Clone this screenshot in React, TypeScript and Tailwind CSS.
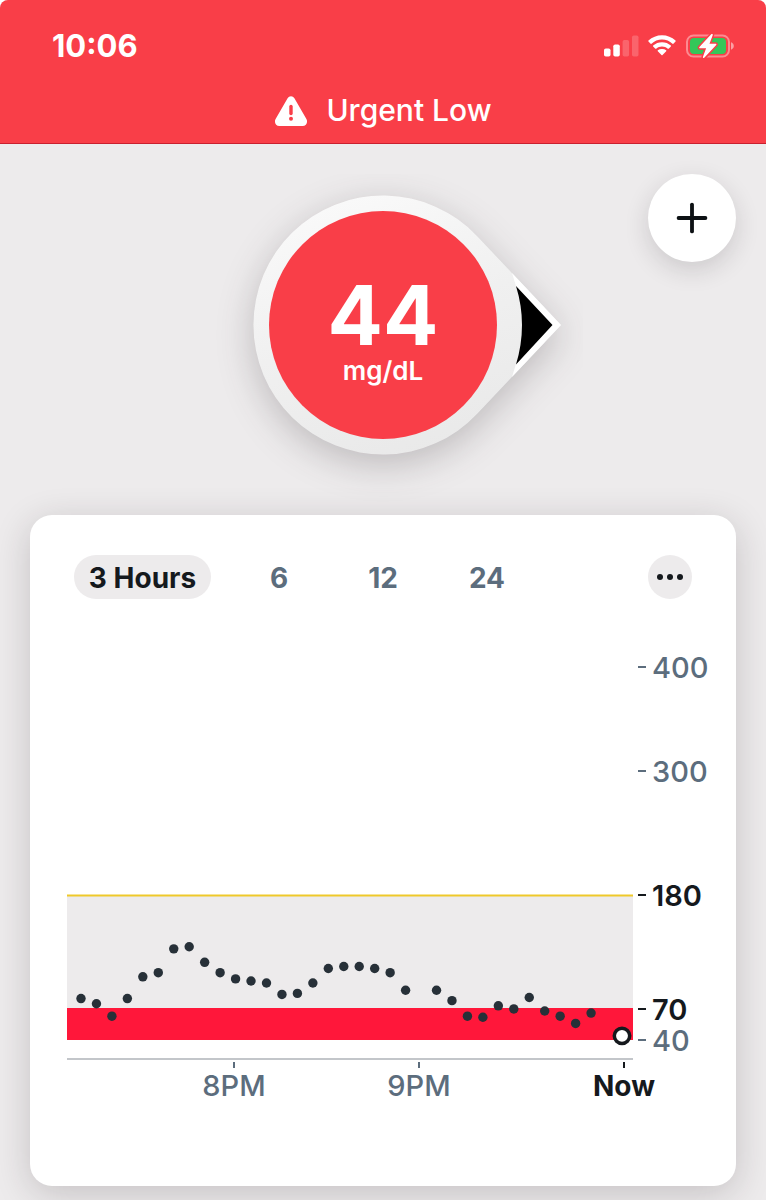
import { useState } from 'react';
import { Plus } from 'lucide-react';

// one reading every five minutes, null where the sensor had no signal
const readings: (number | null)[] = [
  80, 75, 63, 80, 101, 105, 128, 130, 115, 105, 99, 97, 95, 84, 85, 95, 109, 111,
  111, 109, 105, 88, null, 88, 78, 63, 62, 73, 70, 81, 68, 63, 56, 66, null, 44,
];

const levels = [
  { value: 400, strong: false },
  { value: 300, strong: false },
  { value: 180, strong: true },
  { value: 70, strong: true },
  { value: 40, strong: false },
];

const times = [
  { label: '8PM', x: 204, now: false },
  { label: '9PM', x: 389, now: false },
  { label: 'Now', x: 594, now: true },
];

const ranges = ['3', '6', '12', '24'];

const xFor = (index: number) => 51 + (index * 541) / 35;
const yFor = (value: number) => 400 - ((value - 40) * 29) / 28;

function SignalIcon() {
  return (
    <svg width="35" height="22" viewBox="0 0 35 22" fill="white" role="img" aria-label="Signal">
      <rect x="0" y="13.5" width="6.5" height="8" rx="1.8" />
      <rect x="9.3" y="9.5" width="6.5" height="12" rx="1.8" />
      <rect x="18.6" y="5" width="6.5" height="16.5" rx="1.8" opacity="0.2" />
      <rect x="28" y="0.5" width="6.5" height="21" rx="1.8" opacity="0.2" />
    </svg>
  );
}

function WifiIcon() {
  return (
    <svg width="30" height="22" viewBox="0 0 30 22" fill="white" role="img" aria-label="Wi-Fi">
      <path d="M15 4.6c4 0 7.7 1.55 10.5 4.2.25.22.6.22.84-.02l2.2-2.2c.3-.3.28-.7 0-.96C24.9 2.2 20.1.3 15 .3S5.1 2.2 1.46 5.62c-.28.26-.3.66 0 .96l2.2 2.2c.24.24.6.24.84.02C7.3 6.15 11 4.6 15 4.6Z" />
      <path d="M15 11.5c2.2 0 4.2.8 5.8 2.2.25.22.6.22.85-.02l2.2-2.2c.28-.28.28-.7-.02-.97C21.4 8.4 18.4 7.2 15 7.2s-6.4 1.2-8.83 3.31c-.3.27-.3.69-.02.97l2.2 2.2c.25.24.6.24.85.02 1.6-1.4 3.6-2.2 5.8-2.2Z" />
      <path d="M19.2 16.2c.3-.28.28-.7-.02-.95A6.6 6.6 0 0 0 15 13.9a6.6 6.6 0 0 0-4.18 1.35c-.3.25-.32.67-.02.95l3.7 3.7c.28.3.72.3 1 0Z" />
    </svg>
  );
}

function BatteryIcon() {
  return (
    <svg width="49" height="26" viewBox="0 0 49 26" role="img" aria-label="Battery charging">
      <rect x="2" y="2.5" width="42" height="21" rx="6.5" fill="none" stroke="white" strokeOpacity="0.4" strokeWidth="2" />
      <path d="M46 9.3c1.7.6 2.8 2 2.8 3.7s-1.1 3.1-2.8 3.7Z" fill="white" fillOpacity="0.5" />
      <rect x="5" y="5" width="36" height="16" rx="4" fill="#34c759" />
      <path
        d="M26.2 1.3 14.4 14c-.5.6-.2 1.3.6 1.3h6.1L18 23.7c-.4 1.1.7 1.7 1.5.9L31.2 12c.5-.6.2-1.3-.6-1.3h-6.1L27.7 2.2c.4-1.1-.7-1.7-1.5-.9Z"
        fill="white"
        stroke="#f93e48"
        strokeWidth="3"
        paintOrder="stroke"
      />
    </svg>
  );
}

function WarningIcon() {
  return (
    <svg width="34" height="30" viewBox="0 0 34 30" fill="none" aria-hidden="true">
      <path d="M13.6 2.3c1.5-2.7 5.3-2.7 6.8 0l12 20.7c1.8 3.2-.2 7-3.8 7H5.4c-3.6 0-5.6-3.8-3.8-7Z" fill="white" />
      <path d="M17 10.5v7" stroke="#f93e48" strokeWidth="3.4" strokeLinecap="round" />
      <circle cx="17" cy="22.8" r="2" fill="#f93e48" />
    </svg>
  );
}

function Gauge({ value }: { value: number }) {
  return (
    <svg className="w-full" viewBox="0 0 400 341" role="img" aria-label={`${value} mg/dL, steady`}>
      <defs>
        <linearGradient id="ring" x1="0.2" y1="0" x2="0.6" y2="1">
          <stop offset="0" stopColor="#fafafa" />
          <stop offset="0.5" stopColor="#f0f0f0" />
          <stop offset="1" stopColor="#e9e9e9" />
        </linearGradient>
        <filter
          id="ringShadow"
          x="-30%"
          y="-30%"
          width="160%"
          height="170%"
          colorInterpolationFilters="sRGB"
        >
          <feDropShadow dx="0" dy="10" stdDeviation="18" floodColor="#282024" floodOpacity="0.24" />
        </filter>
      </defs>
      <path
        d="M294.2 62.2 378 151l-83.8 88.8A129.5 129.5 0 1 1 294.2 62.2Z"
        fill="url(#ring)"
        filter="url(#ringShadow)"
      />
      <path d="M329 99 378 151 329 203 333 190 369 151 333 112Z" fill="white" />
      <path d="M333 112 369.5 151 333 190.5Q345 151 333 112Z" fill="black" />
      <circle cx="200" cy="151" r="114" fill="#f93e48" />
      <text x="200" y="171" textAnchor="middle" fill="white" className="text-[82px] font-bold">
        {value}
      </text>
      <text x="200" y="206" textAnchor="middle" fill="white" className="text-[26px] font-semibold">
        mg/dL
      </text>
    </svg>
  );
}

function Chart() {
  return (
    <svg className="w-full" viewBox="0 0 706 500" role="img" aria-label="Glucose over the last 3 hours">
      <rect x="37" y={yFor(180)} width="566" height={yFor(70) - yFor(180)} fill="#edebec" />
      <rect x="37" y="368" width="566" height="32" fill="#ff173a" />
      <path d="M37 255.5h566" stroke="#efc92a" strokeWidth="2" />
      <path d="M37 419h566" stroke="#c3c6ca" strokeWidth="2" />

      {levels.map(({ value, strong }) => (
        <g key={value} fill={strong ? '#15191d' : '#5c6d7d'}>
          <rect x="608" y={Math.round(yFor(value)) - 1} width="8" height="2" />
          <text
            x="622"
            y={yFor(value) + 11}
            className={strong ? 'text-[29px] font-semibold' : 'text-[29px] font-medium'}
          >
            {value}
          </text>
        </g>
      ))}

      {times.map(({ label, x, now }) => (
        <g key={label} fill={now ? '#15191d' : '#5c6d7d'}>
          <rect x={x - 1} y="422" width="2" height="6" />
          <text
            x={x}
            y="456"
            textAnchor="middle"
            className={now ? 'text-[28px] font-bold' : 'text-[29px] font-medium'}
          >
            {label}
          </text>
        </g>
      ))}

      {readings.map((value, index) => {
        if (value === null) return null;
        const latest = index === readings.length - 1;
        return (
          <circle
            key={index}
            cx={xFor(index)}
            cy={yFor(value)}
            r={latest ? 7.7 : 4.7}
            fill={latest ? 'white' : '#273038'}
            stroke={latest ? '#15191d' : 'none'}
            strokeWidth="3.5"
          />
        );
      })}
    </svg>
  );
}

export default function App() {
  const [range, setRange] = useState('3');

  return (
    <div className="min-h-screen bg-white font-['Inter',sans-serif]">
      <div className="min-h-screen overflow-hidden rounded-t-lg bg-[#edebec] pb-3.5">
        <header className="border-b border-[#c9202f] bg-[#f93e48] pt-7 text-white">
          <div className="flex h-9 items-center justify-between pr-8 pl-13">
            <time className="text-[31px] font-bold">10:06</time>
            <div className="flex items-center gap-2">
              <SignalIcon />
              <WifiIcon />
              <BatteryIcon />
            </div>
          </div>
          <div className="flex h-[79px] items-center justify-center gap-[18px] pt-3.5">
            <WarningIcon />
            <h1 className="text-[30px] font-medium">Urgent Low</h1>
          </div>
        </header>

        <main className="px-[30px] pt-[30px]">
          <section className="grid grid-cols-[1fr_400px_1fr] items-start">
            <div className="col-start-2">
              <Gauge value={44} />
            </div>
            <button
              aria-label="Add event"
              className="flex size-[88px] items-center justify-center justify-self-end rounded-full bg-white text-[#0d1114] shadow-[0_8px_24px_rgba(40,32,36,0.16)]"
            >
              <Plus size={46} strokeWidth={2} />
            </button>
          </section>

          <section className="rounded-[22px] bg-white pt-10 pb-[46px] shadow-[0_8px_36px_rgba(40,32,36,0.2)]">
            <div className="flex items-center px-11 pb-[41px]">
              {ranges.map((item) => (
                <button
                  key={item}
                  onClick={() => setRange(item)}
                  className={`h-11 rounded-full pt-0.5 text-[28px] font-bold ${
                    item === '3' ? 'mr-4 w-[137px]' : 'w-[104px]'
                  } ${range === item ? 'bg-[#edebec] text-[#15191d]' : 'text-[#5c6d7d]'}`}
                >
                  {item === '3' ? '3 Hours' : item}
                </button>
              ))}
              <button
                aria-label="More options"
                className="ml-auto flex size-11 items-center justify-center gap-1 rounded-full bg-[#edebec]"
              >
                <span className="size-1.5 rounded-full bg-[#15191d]" />
                <span className="size-1.5 rounded-full bg-[#15191d]" />
                <span className="size-1.5 rounded-full bg-[#15191d]" />
              </button>
            </div>
            <Chart />
          </section>
        </main>
      </div>
    </div>
  );
}
